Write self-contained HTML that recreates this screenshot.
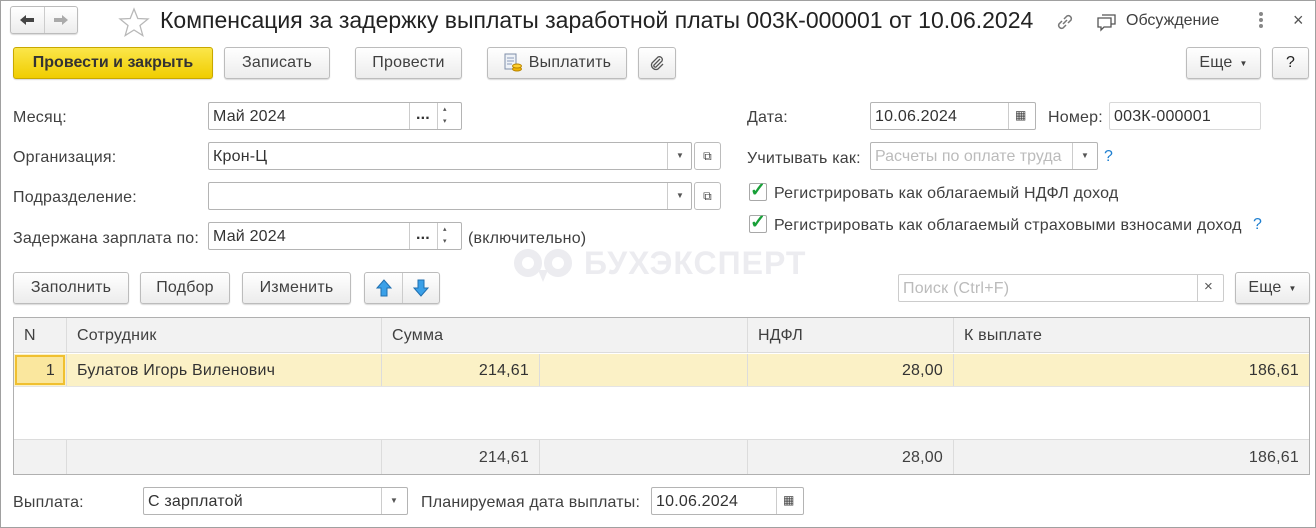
<!DOCTYPE html>
<html><head><meta charset="utf-8"><style>
*{box-sizing:border-box;margin:0;padding:0}
body{width:1316px;height:528px;background:#fff;font-family:"Liberation Sans",Arial,sans-serif;font-size:16px;letter-spacing:.2px;color:#404040;position:relative;overflow:hidden}
.frame{position:absolute;left:0;top:0;width:1316px;height:528px;border:1px solid #a0a0a0}
.a{position:absolute}
.btn{position:absolute;height:32px;border:1px solid #bcbcbc;border-radius:3px;background:linear-gradient(#fff,#ececec);box-shadow:0 1px 1px rgba(0,0,0,.15);display:flex;align-items:center;justify-content:center;color:#404040;font-size:16px}
.inp{position:absolute;height:28px;border:1px solid #b4b4b4;border-radius:2px;background:#fff;color:#333;font-size:16px;padding-left:4px;line-height:28px}
.lbl{position:absolute;font-size:16px;color:#404040;margin-top:2px}
.chk{position:absolute;width:18px;height:18px;border:1px solid #a8a8a8;border-radius:2px;background:#fff}
.q{position:absolute;color:#1e7fd0;font-size:16px}
.cell{position:absolute;top:0;bottom:0;border-left:1px solid #dcdcdc;padding:2px 10px 0;display:flex;align-items:center}
.vs{position:absolute;width:1px;height:26px;background:#ccc}
.dd{position:absolute;font-size:8px;color:#555}
</style></head><body>
<div class="frame"></div>
<div class="btn" style="left:10px;top:6px;width:68px;height:28px;justify-content:flex-start">
 <span style="width:34px;display:flex;justify-content:center"><svg width="16" height="12" viewBox="0 0 16 12"><path d="M1 6l6-5v3h8v4H7v3z" fill="#444"/></svg></span><span style="border-left:1px solid #ccc;height:26px"></span><span style="width:33px;display:flex;justify-content:center"><svg width="16" height="12" viewBox="0 0 16 12"><path d="M15 6L9 1v3H1v4h8v3z" fill="#aaa"/></svg></span>
</div>
<svg class="a" style="left:118px;top:7px" width="32" height="30" viewBox="0 0 32 30"><polygon points="16,2 19.8,11.5 30,12 22,18.5 24.8,28.5 16,23 7.2,28.5 10,18.5 2,12 12.2,11.5" fill="none" stroke="#b8b8b8" stroke-width="1.3"/></svg>
<div class="a" style="left:160px;top:7px;font-size:23px;letter-spacing:0;color:#222">Компенсация за задержку выплаты заработной платы 003К-000001 от 10.06.2024</div>
<svg class="a" style="left:1054px;top:11px" width="22" height="22" viewBox="0 0 22 22"><g fill="none" stroke="#777" stroke-width="1.5"><path d="M9 13l4-4"/><path d="M8 10l-3 3a3 3 0 004 4l3-3"/><path d="M14 12l3-3a3 3 0 00-4-4l-3 3"/></g></svg>
<svg class="a" style="left:1096px;top:11px" width="22" height="22" viewBox="0 0 22 22"><g fill="none" stroke="#555" stroke-width="1.3"><path d="M6 4h13v9h-4"/><path d="M2 7h13v9H8l-3 3v-3H2z"/></g></svg>
<div class="a" style="left:1126px;top:12px;color:#404040;letter-spacing:0">Обсуждение</div>
<div class="a" style="left:1259px;top:12px;width:4px;font-size:0"><div style="width:4px;height:4px;border-radius:2px;background:#888;margin-bottom:2px"></div><div style="width:4px;height:4px;border-radius:2px;background:#888;margin-bottom:2px"></div><div style="width:4px;height:4px;border-radius:2px;background:#888"></div></div>
<div class="a" style="left:1293px;top:10px;font-size:18px;color:#555">×</div>
<div class="btn" style="left:13px;top:47px;width:200px;background:linear-gradient(#fbe64a,#f0cd00);border-color:#c8a800;font-weight:bold;color:#333;letter-spacing:0">Провести и закрыть</div>
<div class="btn" style="left:224px;top:47px;width:106px">Записать</div>
<div class="btn" style="left:355px;top:47px;width:107px">Провести</div>
<div class="btn" style="left:487px;top:47px;width:140px"><svg width="20" height="20" viewBox="0 0 20 20" style="margin-right:6px"><rect x="2" y="1" width="11" height="15" fill="#eef2f7" stroke="#7f8ea8"/><path d="M4 5h7M4 8h7M4 11h5" stroke="#8a9ab8"/><ellipse cx="14" cy="16" rx="4.5" ry="2" fill="#f2b400" stroke="#b88400"/><ellipse cx="14" cy="13" rx="4.5" ry="2" fill="#ffd030" stroke="#b88400"/></svg>Выплатить</div>
<div class="btn" style="left:638px;top:47px;width:38px"><svg width="16" height="18" viewBox="0 0 16 18"><path d="M11 5l-6 6a1.5 1.5 0 002 2l6-6a3 3 0 00-4-4l-6 6a4.5 4.5 0 006 6l5-5" fill="none" stroke="#555" stroke-width="1.3"/></svg></div>
<div class="btn" style="left:1186px;top:47px;width:75px">Еще <span style="font-size:8px;margin-left:7px">▼</span></div>
<div class="btn" style="left:1272px;top:47px;width:37px;color:#222">?</div>
<div class="lbl" style="left:13px;top:107px">Месяц:</div>
<div class="inp" style="left:208px;top:102px;width:254px">Май 2024</div>
<div class="vs" style="left:409px;top:103px"></div>
<div class="a" style="left:416px;top:106px;font-weight:bold;color:#333">...</div>
<div class="vs" style="left:437px;top:103px"></div>
<div class="a" style="left:443px;top:104px;font-size:7px;color:#555;line-height:12px">▴<br>▾</div>
<div class="lbl" style="left:13px;top:147px">Организация:</div>
<div class="inp" style="left:208px;top:142px;width:484px">Крон-Ц</div>
<div class="vs" style="left:667px;top:143px"></div>
<div class="dd" style="left:676px;top:151px">▼</div>
<div class="btn" style="left:694px;top:142px;width:27px;height:28px;box-shadow:none;background:#fff;font-size:12px">⧉</div>
<div class="lbl" style="left:13px;top:187px">Подразделение:</div>
<div class="inp" style="left:208px;top:182px;width:484px"></div>
<div class="vs" style="left:667px;top:183px"></div>
<div class="dd" style="left:676px;top:191px">▼</div>
<div class="btn" style="left:694px;top:182px;width:27px;height:28px;box-shadow:none;background:#fff;font-size:12px">⧉</div>
<div class="lbl" style="left:13px;top:228px">Задержана зарплата по:</div>
<div class="inp" style="left:208px;top:222px;width:254px">Май 2024</div>
<div class="vs" style="left:409px;top:223px"></div>
<div class="a" style="left:416px;top:226px;font-weight:bold;color:#333">...</div>
<div class="vs" style="left:437px;top:223px"></div>
<div class="a" style="left:443px;top:224px;font-size:7px;color:#555;line-height:12px">▴<br>▾</div>
<div class="lbl" style="left:468px;top:228px">(включительно)</div>
<div class="lbl" style="left:747px;top:107px">Дата:</div>
<div class="inp" style="left:870px;top:102px;width:166px">10.06.2024</div>
<div class="vs" style="left:1008px;top:103px"></div>
<div class="a" style="left:1015px;top:108px;font-size:12px;color:#444">▦</div>
<div class="lbl" style="left:1048px;top:107px">Номер:</div>
<div class="inp" style="left:1109px;top:102px;width:152px;border-color:#d8d8d8">003К-000001</div>
<div class="lbl" style="left:747px;top:148px">Учитывать как:</div>
<div class="inp" style="left:870px;top:142px;width:228px;color:#bbb;letter-spacing:0">Расчеты по оплате труда</div>
<div class="vs" style="left:1072px;top:143px"></div>
<div class="dd" style="left:1081px;top:151px">▼</div>
<div class="q" style="left:1104px;top:148px">?</div>
<div class="chk" style="left:749px;top:183px"></div><div class="a" style="left:750px;top:179px;color:#18a038;font-size:19px;font-weight:bold">✓</div>
<div class="lbl" style="left:774px;top:183px">Регистрировать как облагаемый НДФЛ доход</div>
<div class="chk" style="left:749px;top:215px"></div><div class="a" style="left:750px;top:211px;color:#18a038;font-size:19px;font-weight:bold">✓</div>
<div class="lbl" style="left:774px;top:215px">Регистрировать как облагаемый страховыми взносами доход</div>
<div class="q" style="left:1253px;top:216px">?</div>
<svg class="a" style="left:510px;top:248px" width="70" height="36" viewBox="0 0 70 36"><g fill="none" stroke="#ececf0" stroke-width="8"><circle cx="18" cy="15" r="10"/><circle cx="48" cy="15" r="10"/></g><path d="M28 22l5 12 5-12z" fill="#ececf0"/></svg>
<div class="a" style="left:584px;top:245px;font-size:32px;font-weight:bold;color:#ececf0;letter-spacing:1px">БУХЭКСПЕРТ</div>
<div class="btn" style="left:13px;top:272px;width:116px">Заполнить</div>
<div class="btn" style="left:140px;top:272px;width:90px">Подбор</div>
<div class="btn" style="left:242px;top:272px;width:109px">Изменить</div>
<div class="btn" style="left:364px;top:272px;width:76px;justify-content:flex-start">
 <span style="width:38px;display:flex;justify-content:center"><svg width="16" height="18" viewBox="0 0 16 18"><path d="M8 1L1 9h4v8h6V9h4z" fill="#3aa0e8" stroke="#1f6fb0"/></svg></span><span style="border-left:1px solid #ccc;height:30px"></span><span style="width:36px;display:flex;justify-content:center"><svg width="16" height="18" viewBox="0 0 16 18"><path d="M8 17L1 9h4V1h6v8h4z" fill="#3aa0e8" stroke="#1f6fb0"/></svg></span></div>
<div class="inp" style="left:898px;top:274px;width:326px;color:#bbb;border-color:#ccc">Поиск (Ctrl+F)</div>
<div class="vs" style="left:1197px;top:275px"></div>
<div class="a" style="left:1204px;top:278px;font-size:15px;color:#555">×</div>
<div class="btn" style="left:1235px;top:272px;width:75px">Еще <span style="font-size:8px;margin-left:7px">▼</span></div>
<div class="a" style="left:13px;top:317px;width:1297px;height:158px;border:1px solid #b0b0b0">
 <div class="a" style="left:0;top:0;width:1295px;height:35px;background:#f2f2f2;border-bottom:1px solid #dcdcdc">
  <div class="cell" style="left:0;width:52px;border:0">N</div>
  <div class="cell" style="left:52px;width:315px">Сотрудник</div>
  <div class="cell" style="left:367px;width:366px">Сумма</div>
  <div class="cell" style="left:733px;width:206px">НДФЛ</div>
  <div class="cell" style="left:939px;width:356px">К выплате</div>
 </div>
 <div class="a" style="left:0;top:36px;width:1295px;height:33px;background:#fbf1c6;border-bottom:1px solid #e4e4e4;color:#333">
  <div class="cell" style="left:1px;width:50px;top:1px;bottom:1px;border:2px solid #f0c030;background:#fae79e;justify-content:flex-end;padding-right:8px">1</div>
  <div class="cell" style="left:52px;width:315px">Булатов Игорь Виленович</div>
  <div class="cell" style="left:367px;width:158px;justify-content:flex-end">214,61</div>
  <div class="cell" style="left:525px;width:208px"></div>
  <div class="cell" style="left:733px;width:206px;justify-content:flex-end">28,00</div>
  <div class="cell" style="left:939px;width:356px;justify-content:flex-end">186,61</div>
 </div>
 <div class="a" style="left:0;top:121px;width:1295px;height:35px;background:#f2f2f2;border-top:1px solid #dcdcdc">
  <div class="cell" style="left:0;width:52px;border:0"></div>
  <div class="cell" style="left:52px;width:315px"></div>
  <div class="cell" style="left:367px;width:158px;justify-content:flex-end">214,61</div>
  <div class="cell" style="left:525px;width:208px"></div>
  <div class="cell" style="left:733px;width:206px;justify-content:flex-end">28,00</div>
  <div class="cell" style="left:939px;width:356px;justify-content:flex-end">186,61</div>
 </div>
</div>
<div class="lbl" style="left:13px;top:492px">Выплата:</div>
<div class="inp" style="left:143px;top:487px;width:265px">С зарплатой</div>
<div class="vs" style="left:381px;top:488px"></div>
<div class="dd" style="left:390px;top:496px">▼</div>
<div class="lbl" style="left:421px;top:492px">Планируемая дата выплаты:</div>
<div class="inp" style="left:651px;top:487px;width:153px">10.06.2024</div>
<div class="vs" style="left:776px;top:488px"></div>
<div class="a" style="left:783px;top:493px;font-size:12px;color:#444">▦</div>
</body></html>
